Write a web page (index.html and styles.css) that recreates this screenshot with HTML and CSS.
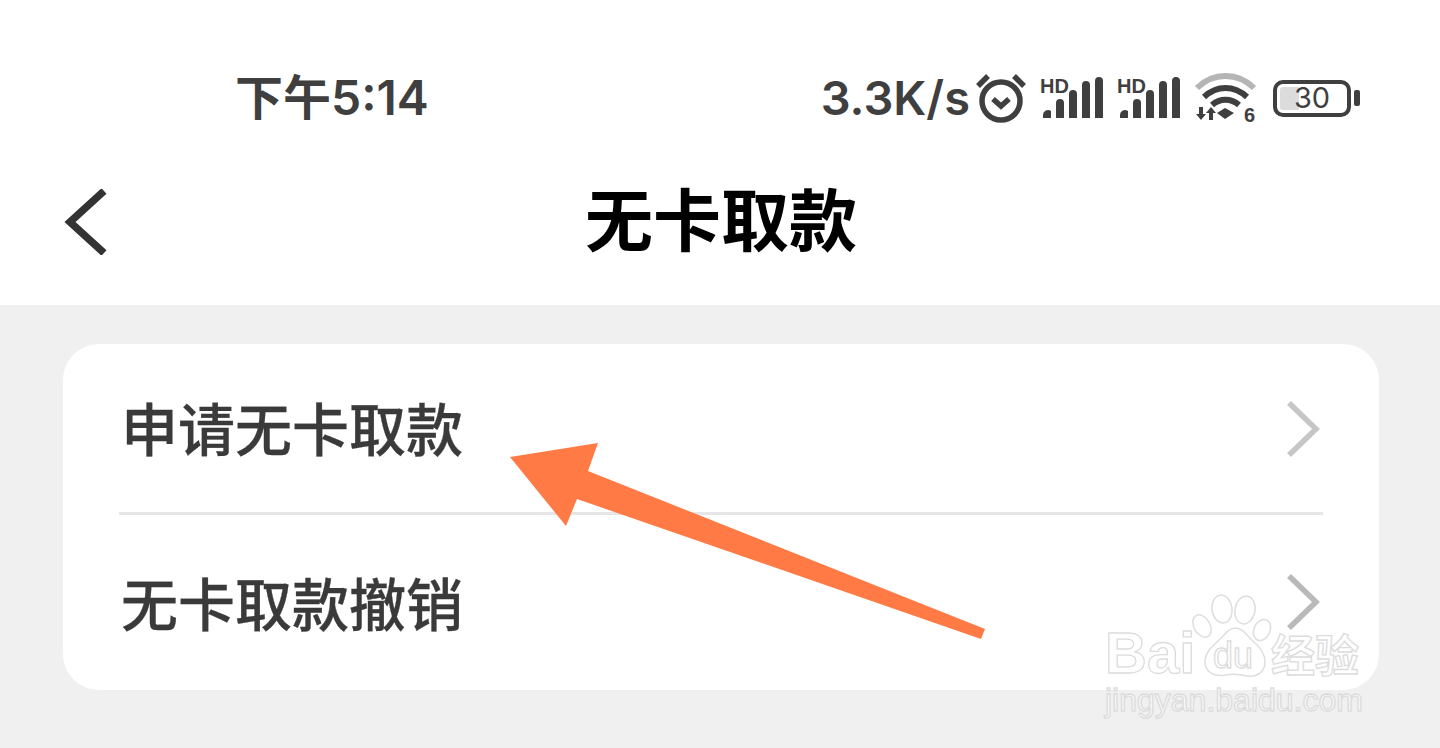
FILE: index.html
```html
<!DOCTYPE html>
<html lang="zh-CN">
<head>
  <meta charset="utf-8">
  <title>无卡取款</title>
  <link rel="stylesheet" href="styles.css">
</head>
<body>
  <div class="page">
    <header class="top">
      <div class="status">
        <span class="time">下午5:14</span>
        <div class="status-right">
          <span class="speed">3.3K/s</span>
          <!-- alarm -->
          <svg class="ico-alarm" width="52" height="52" viewBox="0 0 52 52">
            <circle cx="26" cy="29" r="19" fill="none" stroke="#3f3f3f" stroke-width="5.5"/>
            <path d="M18 27l8 7 8-7" fill="none" stroke="#3f3f3f" stroke-width="5.5"/>
            <path d="M3 14L13 4M49 14L39 4" fill="none" stroke="#3f3f3f" stroke-width="5.5"/>
          </svg>
          <!-- signal x2 -->
          <svg class="ico-signal" width="64" height="50" viewBox="0 -4 64 50">
            <text x="0" y="16" class="hd">HD</text>
            <path d="M3 41v-3a5 5 0 0 1 8-4v7zM16 41V26a4 4 0 0 1 8 0v15zM29 41V17a4 4 0 0 1 8 0v24zM42 41V8a4 4 0 0 1 8 0v33zM55 41V4a4 4 0 0 1 8 0v37z" fill="#3f3f3f"/>
          </svg>
          <svg class="ico-signal" width="64" height="50" viewBox="0 -4 64 50">
            <text x="0" y="16" class="hd">HD</text>
            <path d="M3 41v-3a5 5 0 0 1 8-4v7zM16 41V26a4 4 0 0 1 8 0v15zM29 41V17a4 4 0 0 1 8 0v24zM42 41V8a4 4 0 0 1 8 0v33zM55 41V4a4 4 0 0 1 8 0v37z" fill="#3f3f3f"/>
          </svg>
          <!-- wifi -->
          <svg class="ico-wifi" width="64" height="56" viewBox="0 -3 64 56">
            <path d="M3 15C19 -1 44 -1 60 15" fill="none" stroke="#b5b5b5" stroke-width="6"/>
            <path d="M10 24C23 12 40 12 53 24M18 32C26 25 37 25 45 32" fill="none" stroke="#3f3f3f" stroke-width="6"/>
            <path d="M23 40l8-5 9 5-9 6z" fill="#3f3f3f"/>
            <path d="M5 34h4v7h3l-5 6-5-6h3zM15 47v-7h-3l5-6 5 6h-3v7z" fill="#3f3f3f"/>
            <text x="50" y="49" class="six">6</text>
          </svg>
          <!-- battery -->
          <div class="battery">
            <div class="battery-body">
              <span class="battery-fill"></span>
              <span class="battery-num">30</span>
            </div>
            <span class="battery-nub"></span>
          </div>
        </div>
      </div>
      <nav class="nav">
        <svg class="back" width="44" height="66" viewBox="0 0 44 66">
          <path d="M40 2L6 33l34 31" fill="none" stroke="#333" stroke-width="7.5"/>
        </svg>
        <h1 class="title">无卡取款</h1>
      </nav>
    </header>

    <section class="card">
      <div class="row row-first">
        <span class="row-label">申请无卡取款</span>
        <svg class="chev" width="34" height="56" viewBox="0 0 34 56"><path d="M3 2l27 26L3 54" fill="none" stroke="#c6c6c6" stroke-width="5.5"/></svg>
      </div>
      <div class="row row-second">
        <span class="row-label">无卡取款撤销</span>
        <svg class="chev" width="34" height="56" viewBox="0 0 34 56"><path d="M3 2l27 26L3 54" fill="none" stroke="#b9b9b9" stroke-width="5.5"/></svg>
      </div>
    </section>

    <!-- arrow + watermark sit on top of the screenshot -->
    <svg class="overlay" width="1440" height="748" viewBox="0 0 1440 748">
      <polygon points="510,457 598,443 588,471 985,629 981,639 577,499 566,526" fill="#ff7a45"/>
      <g class="wm-shape">
        <ellipse cx="1202" cy="626" rx="8" ry="12" transform="rotate(-30 1202 626)"/>
        <ellipse cx="1222" cy="609" rx="10" ry="14" transform="rotate(-8 1222 609)"/>
        <ellipse cx="1245" cy="610" rx="10" ry="14" transform="rotate(10 1245 610)"/>
        <ellipse cx="1262" cy="630" rx="8" ry="11" transform="rotate(25 1262 630)"/>
        <path d="M1236 628c7 0 11 8 17 13 7 6 12 12 12 21 0 10-8 15-17 14-8-1-14-3-22-1-11 2-22-2-21-15 1-9 8-14 14-20 6-5 9-12 17-12z"/>
      </g>
      <text x="1105" y="673" class="wm wm-big">Bai</text>
      <text x="1213" y="668" class="wm wm-du">du</text>
      <text x="1271" y="672" class="wm wm-cn">经验</text>
      <text x="1105" y="711" class="wm wm-url">jingyan.baidu.com</text>
    </svg>
  </div>
</body>
</html>
```

FILE: styles.css
```css
* {
  margin: 0;
  padding: 0;
  box-sizing: border-box;
}

body {
  background: #f0f0f0;
  font-family: "Noto Sans CJK SC", "Noto Sans", sans-serif;
  overflow: hidden;
}

.page {
  position: relative;
  width: 1440px;
  height: 748px;
  overflow: hidden;
}

.top {
  height: 305px;
  background: #fff;
  padding-top: 68px;
}

/* status bar */
.status {
  display: flex;
  align-items: center;
  justify-content: space-between;
  height: 60px;
  padding: 0 80px 0 235px;
  color: #3f3f3f;
}

.time {
  font-family: Inter, "Noto Sans CJK SC", sans-serif;
  font-size: 48px;
  font-weight: 600;
  line-height: 60px;
}

.status-right {
  display: flex;
  align-items: center;
}

.speed {
  font-family: Inter, sans-serif;
  font-size: 47px;
  font-weight: 600;
  line-height: 60px;
  margin-right: 5px;
}

.ico-signal {
  margin-left: 13px;
}

.ico-alarm + .ico-signal {
  margin-left: 13px;
}

.ico-wifi {
  margin-left: 13px;
}

.hd {
  font-family: "Liberation Sans", sans-serif;
  font-size: 20px;
  font-weight: 700;
  fill: #3f3f3f;
}

.six {
  font-family: "Liberation Sans", sans-serif;
  font-size: 20px;
  font-weight: 700;
  fill: #3f3f3f;
}

.battery {
  display: flex;
  align-items: center;
  margin-left: 15px;
}

.battery-body {
  position: relative;
  display: flex;
  align-items: center;
  justify-content: center;
  width: 78px;
  height: 37px;
  border: 4px solid #3f3f3f;
  border-radius: 10px;
}

.battery-fill {
  position: absolute;
  left: 3px;
  top: 3px;
  bottom: 3px;
  width: 19px;
  background: #dcdcdc;
  border-radius: 3px 0 0 3px;
}

.battery-num {
  position: relative;
  font-family: Inter, sans-serif;
  font-size: 29px;
  line-height: 30px;
  color: #3f3f3f;
}

.battery-nub {
  width: 6px;
  height: 16px;
  margin-left: 3px;
  background: #3f3f3f;
  border-radius: 2px;
}

/* title row */
.nav {
  display: grid;
  grid-template-columns: 1fr auto 1fr;
  align-items: center;
  height: 124px;
  margin-top: 32px;
  padding: 0 62px 0 64px;
}

.title {
  font-size: 68px;
  font-weight: 700;
  line-height: 90px;
  color: #000;
  padding-bottom: 11px;
}

/* list card */
.card {
  margin: 39px 61px 0 63px;
  height: 346px;
  background: #fff;
  border-radius: 36px;
}

.row {
  display: flex;
  align-items: center;
  justify-content: space-between;
  padding: 0 59px 0 58px;
  height: 173px;
}

.row-first {
  position: relative;
}

.row-first::after {
  content: "";
  position: absolute;
  left: 56px;
  right: 56px;
  bottom: 2px;
  height: 3px;
  background: #e6e6e6;
}

.row-first .row-label {
  padding-bottom: 9px;
}

.row-second .row-label {
  padding-bottom: 6px;
}

.row-first .chev {
  margin-top: -3px;
}

.row-second .chev {
  margin-top: -3px;
}

.row-label {
  font-size: 57px;
  font-weight: 500;
  line-height: 76px;
  color: #3a3a3a;
  -webkit-text-stroke: .3px #3a3a3a;
}

/* things on top */
.overlay {
  position: absolute;
  left: 0;
  top: 0;
}

.wm-shape {
  fill: rgba(255, 255, 255, .55);
  stroke: #dedede;
  stroke-width: 1.5;
}

.wm {
  fill: rgba(255, 255, 255, .6);
  stroke: #dcdcdc;
  stroke-width: 1.3;
}

.wm-big {
  font-family: "Liberation Sans", sans-serif;
  font-size: 58px;
  font-weight: 700;
}

.wm-du {
  font-family: "Liberation Sans", sans-serif;
  font-size: 36px;
}

.wm-cn {
  font-family: "Noto Sans CJK SC", sans-serif;
  font-size: 44px;
  font-weight: 700;
}

.wm-url {
  font-family: "Liberation Sans", sans-serif;
  font-size: 32px;
}
```
